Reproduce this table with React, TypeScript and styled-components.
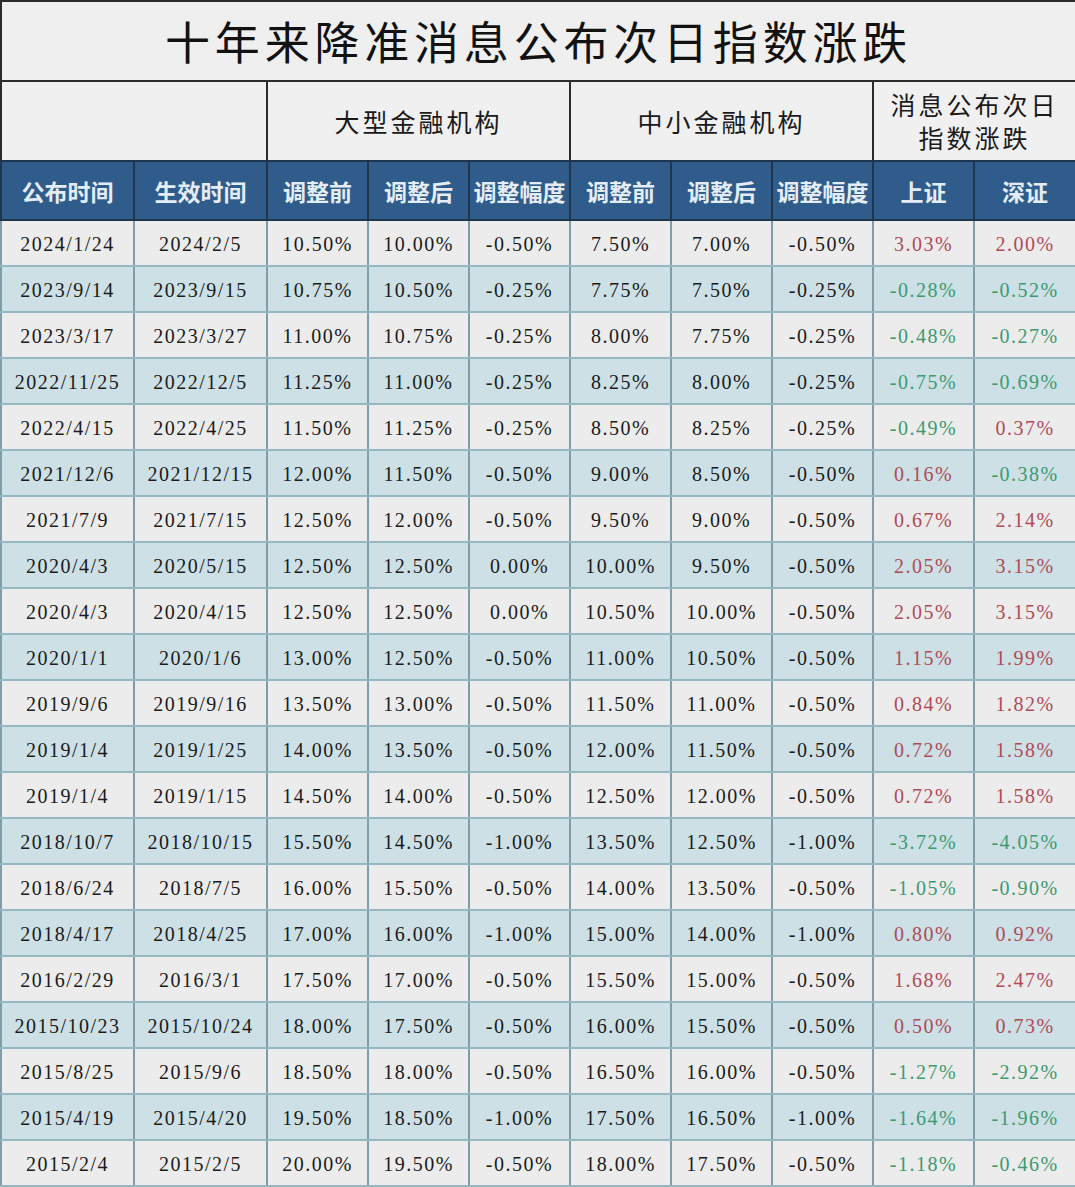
import React from 'react';
import styled, { createGlobalStyle } from 'styled-components';

const GlobalStyle = createGlobalStyle`
	html, body {
		margin: 0;
		padding: 0;
		background: #ffffff;
	}
`;

type Tone = 'up' | 'down' | 'plain';

interface Row {
	announce: string;
	effective: string;
	bigBefore: string;
	bigAfter: string;
	bigDelta: string;
	smallBefore: string;
	smallAfter: string;
	smallDelta: string;
	sh: string;
	sz: string;
}

const rows: Row[] = [
	['2024/1/24', '2024/2/5', '10.50%', '10.00%', '-0.50%', '7.50%', '7.00%', '-0.50%', '3.03%', '2.00%'],
	['2023/9/14', '2023/9/15', '10.75%', '10.50%', '-0.25%', '7.75%', '7.50%', '-0.25%', '-0.28%', '-0.52%'],
	['2023/3/17', '2023/3/27', '11.00%', '10.75%', '-0.25%', '8.00%', '7.75%', '-0.25%', '-0.48%', '-0.27%'],
	['2022/11/25', '2022/12/5', '11.25%', '11.00%', '-0.25%', '8.25%', '8.00%', '-0.25%', '-0.75%', '-0.69%'],
	['2022/4/15', '2022/4/25', '11.50%', '11.25%', '-0.25%', '8.50%', '8.25%', '-0.25%', '-0.49%', '0.37%'],
	['2021/12/6', '2021/12/15', '12.00%', '11.50%', '-0.50%', '9.00%', '8.50%', '-0.50%', '0.16%', '-0.38%'],
	['2021/7/9', '2021/7/15', '12.50%', '12.00%', '-0.50%', '9.50%', '9.00%', '-0.50%', '0.67%', '2.14%'],
	['2020/4/3', '2020/5/15', '12.50%', '12.50%', '0.00%', '10.00%', '9.50%', '-0.50%', '2.05%', '3.15%'],
	['2020/4/3', '2020/4/15', '12.50%', '12.50%', '0.00%', '10.50%', '10.00%', '-0.50%', '2.05%', '3.15%'],
	['2020/1/1', '2020/1/6', '13.00%', '12.50%', '-0.50%', '11.00%', '10.50%', '-0.50%', '1.15%', '1.99%'],
	['2019/9/6', '2019/9/16', '13.50%', '13.00%', '-0.50%', '11.50%', '11.00%', '-0.50%', '0.84%', '1.82%'],
	['2019/1/4', '2019/1/25', '14.00%', '13.50%', '-0.50%', '12.00%', '11.50%', '-0.50%', '0.72%', '1.58%'],
	['2019/1/4', '2019/1/15', '14.50%', '14.00%', '-0.50%', '12.50%', '12.00%', '-0.50%', '0.72%', '1.58%'],
	['2018/10/7', '2018/10/15', '15.50%', '14.50%', '-1.00%', '13.50%', '12.50%', '-1.00%', '-3.72%', '-4.05%'],
	['2018/6/24', '2018/7/5', '16.00%', '15.50%', '-0.50%', '14.00%', '13.50%', '-0.50%', '-1.05%', '-0.90%'],
	['2018/4/17', '2018/4/25', '17.00%', '16.00%', '-1.00%', '15.00%', '14.00%', '-1.00%', '0.80%', '0.92%'],
	['2016/2/29', '2016/3/1', '17.50%', '17.00%', '-0.50%', '15.50%', '15.00%', '-0.50%', '1.68%', '2.47%'],
	['2015/10/23', '2015/10/24', '18.00%', '17.50%', '-0.50%', '16.00%', '15.50%', '-0.50%', '0.50%', '0.73%'],
	['2015/8/25', '2015/9/6', '18.50%', '18.00%', '-0.50%', '16.50%', '16.00%', '-0.50%', '-1.27%', '-2.92%'],
	['2015/4/19', '2015/4/20', '19.50%', '18.50%', '-1.00%', '17.50%', '16.50%', '-1.00%', '-1.64%', '-1.96%'],
	['2015/2/4', '2015/2/5', '20.00%', '19.50%', '-0.50%', '18.00%', '17.50%', '-0.50%', '-1.18%', '-0.46%']
].map(r => ({
	announce: r[0],
	effective: r[1],
	bigBefore: r[2],
	bigAfter: r[3],
	bigDelta: r[4],
	smallBefore: r[5],
	smallAfter: r[6],
	smallDelta: r[7],
	sh: r[8],
	sz: r[9]
}));

const columnWidths = [133, 133, 101, 101, 101, 101, 101, 101, 101, 102];
const headers = ['公布时间', '生效时间', '调整前', '调整后', '调整幅度', '调整前', '调整后', '调整幅度', '上证', '深证'];

const toneOf = (v: string): Tone => (v.startsWith('-') ? 'down' : 'up');

const Sheet = styled.table`
	width: 1075px;
	border-collapse: collapse;
	table-layout: fixed;
	border: 2px solid #2b2b2b;
	font-family: 'Liberation Serif', 'Noto Sans CJK SC', serif;
`;

const TitleCell = styled.th`
	height: 76px;
	padding: 0 0 2px;
	background: #efefef;
	border: 2px solid #2b2b2b;
	color: #121212;
	font-family: 'Noto Sans CJK SC', sans-serif;
	font-size: 45px;
	font-weight: 400;
	letter-spacing: 4.8px;
	text-align: center;
	vertical-align: middle;
	line-height: 1;
`;

const GroupCell = styled.th`
	height: 78px;
	padding: 0;
	background: #f0f0f0;
	border: 2px solid #2b2b2b;
	border-bottom-color: #1f3550;
	color: #1a1a1a;
	font-family: 'Noto Sans CJK SC', sans-serif;
	font-size: 25px;
	font-weight: 400;
	letter-spacing: 3px;
	line-height: 33px;
	text-align: center;
`;

const HeadCell = styled.th`
	height: 57px;
	padding: 0;
	background: #2f5c8b;
	border: 2px solid #1f3550;
	color: #e4edf5;
	font-family: 'Noto Sans CJK SC', sans-serif;
	font-size: 23px;
	font-weight: 700;
	letter-spacing: 0;
	text-align: center;
	white-space: nowrap;
`;

const DataRow = styled.tr<{ $alt: boolean }>`
	background: ${p => (p.$alt ? '#cde0e6' : '#ececec')};
`;

const DataCell = styled.td<{ $tone?: Tone }>`
	height: 42px;
	padding: 2px 0 0;
	border-left: 2px solid #7f9da8;
	border-right: 2px solid #7f9da8;
	border-top: 2px solid #94b7c1;
	border-bottom: 2px solid #94b7c1;
	color: ${p =>
		p.$tone === 'up' ? '#b04a58' : p.$tone === 'down' ? '#3c9a72' : '#1a1a1a'};
	font-size: 20px;
	letter-spacing: 1.5px;
	text-align: center;
	white-space: nowrap;
`;

const App: React.FC = () => {
	return (
		<>
			<GlobalStyle />
			<Sheet>
				<colgroup>
					{columnWidths.map((w, i) => (
						<col key={i} style={{ width: w }} />
					))}
				</colgroup>
				<thead>
					<tr>
						<TitleCell colSpan={10}>十年来降准消息公布次日指数涨跌</TitleCell>
					</tr>
					<tr>
						<GroupCell colSpan={2} />
						<GroupCell colSpan={3}>大型金融机构</GroupCell>
						<GroupCell colSpan={3}>中小金融机构</GroupCell>
						<GroupCell colSpan={2}>
							消息公布次日
							<br />
							指数涨跌
						</GroupCell>
					</tr>
					<tr>
						{headers.map((h, i) => (
							<HeadCell key={i}>{h}</HeadCell>
						))}
					</tr>
				</thead>
				<tbody>
					{rows.map((r, i) => (
						<DataRow key={i} $alt={i % 2 === 1}>
							<DataCell>{r.announce}</DataCell>
							<DataCell>{r.effective}</DataCell>
							<DataCell>{r.bigBefore}</DataCell>
							<DataCell>{r.bigAfter}</DataCell>
							<DataCell>{r.bigDelta}</DataCell>
							<DataCell>{r.smallBefore}</DataCell>
							<DataCell>{r.smallAfter}</DataCell>
							<DataCell>{r.smallDelta}</DataCell>
							<DataCell $tone={toneOf(r.sh)}>{r.sh}</DataCell>
							<DataCell $tone={toneOf(r.sz)}>{r.sz}</DataCell>
						</DataRow>
					))}
				</tbody>
			</Sheet>
		</>
	);
};

export default App;
